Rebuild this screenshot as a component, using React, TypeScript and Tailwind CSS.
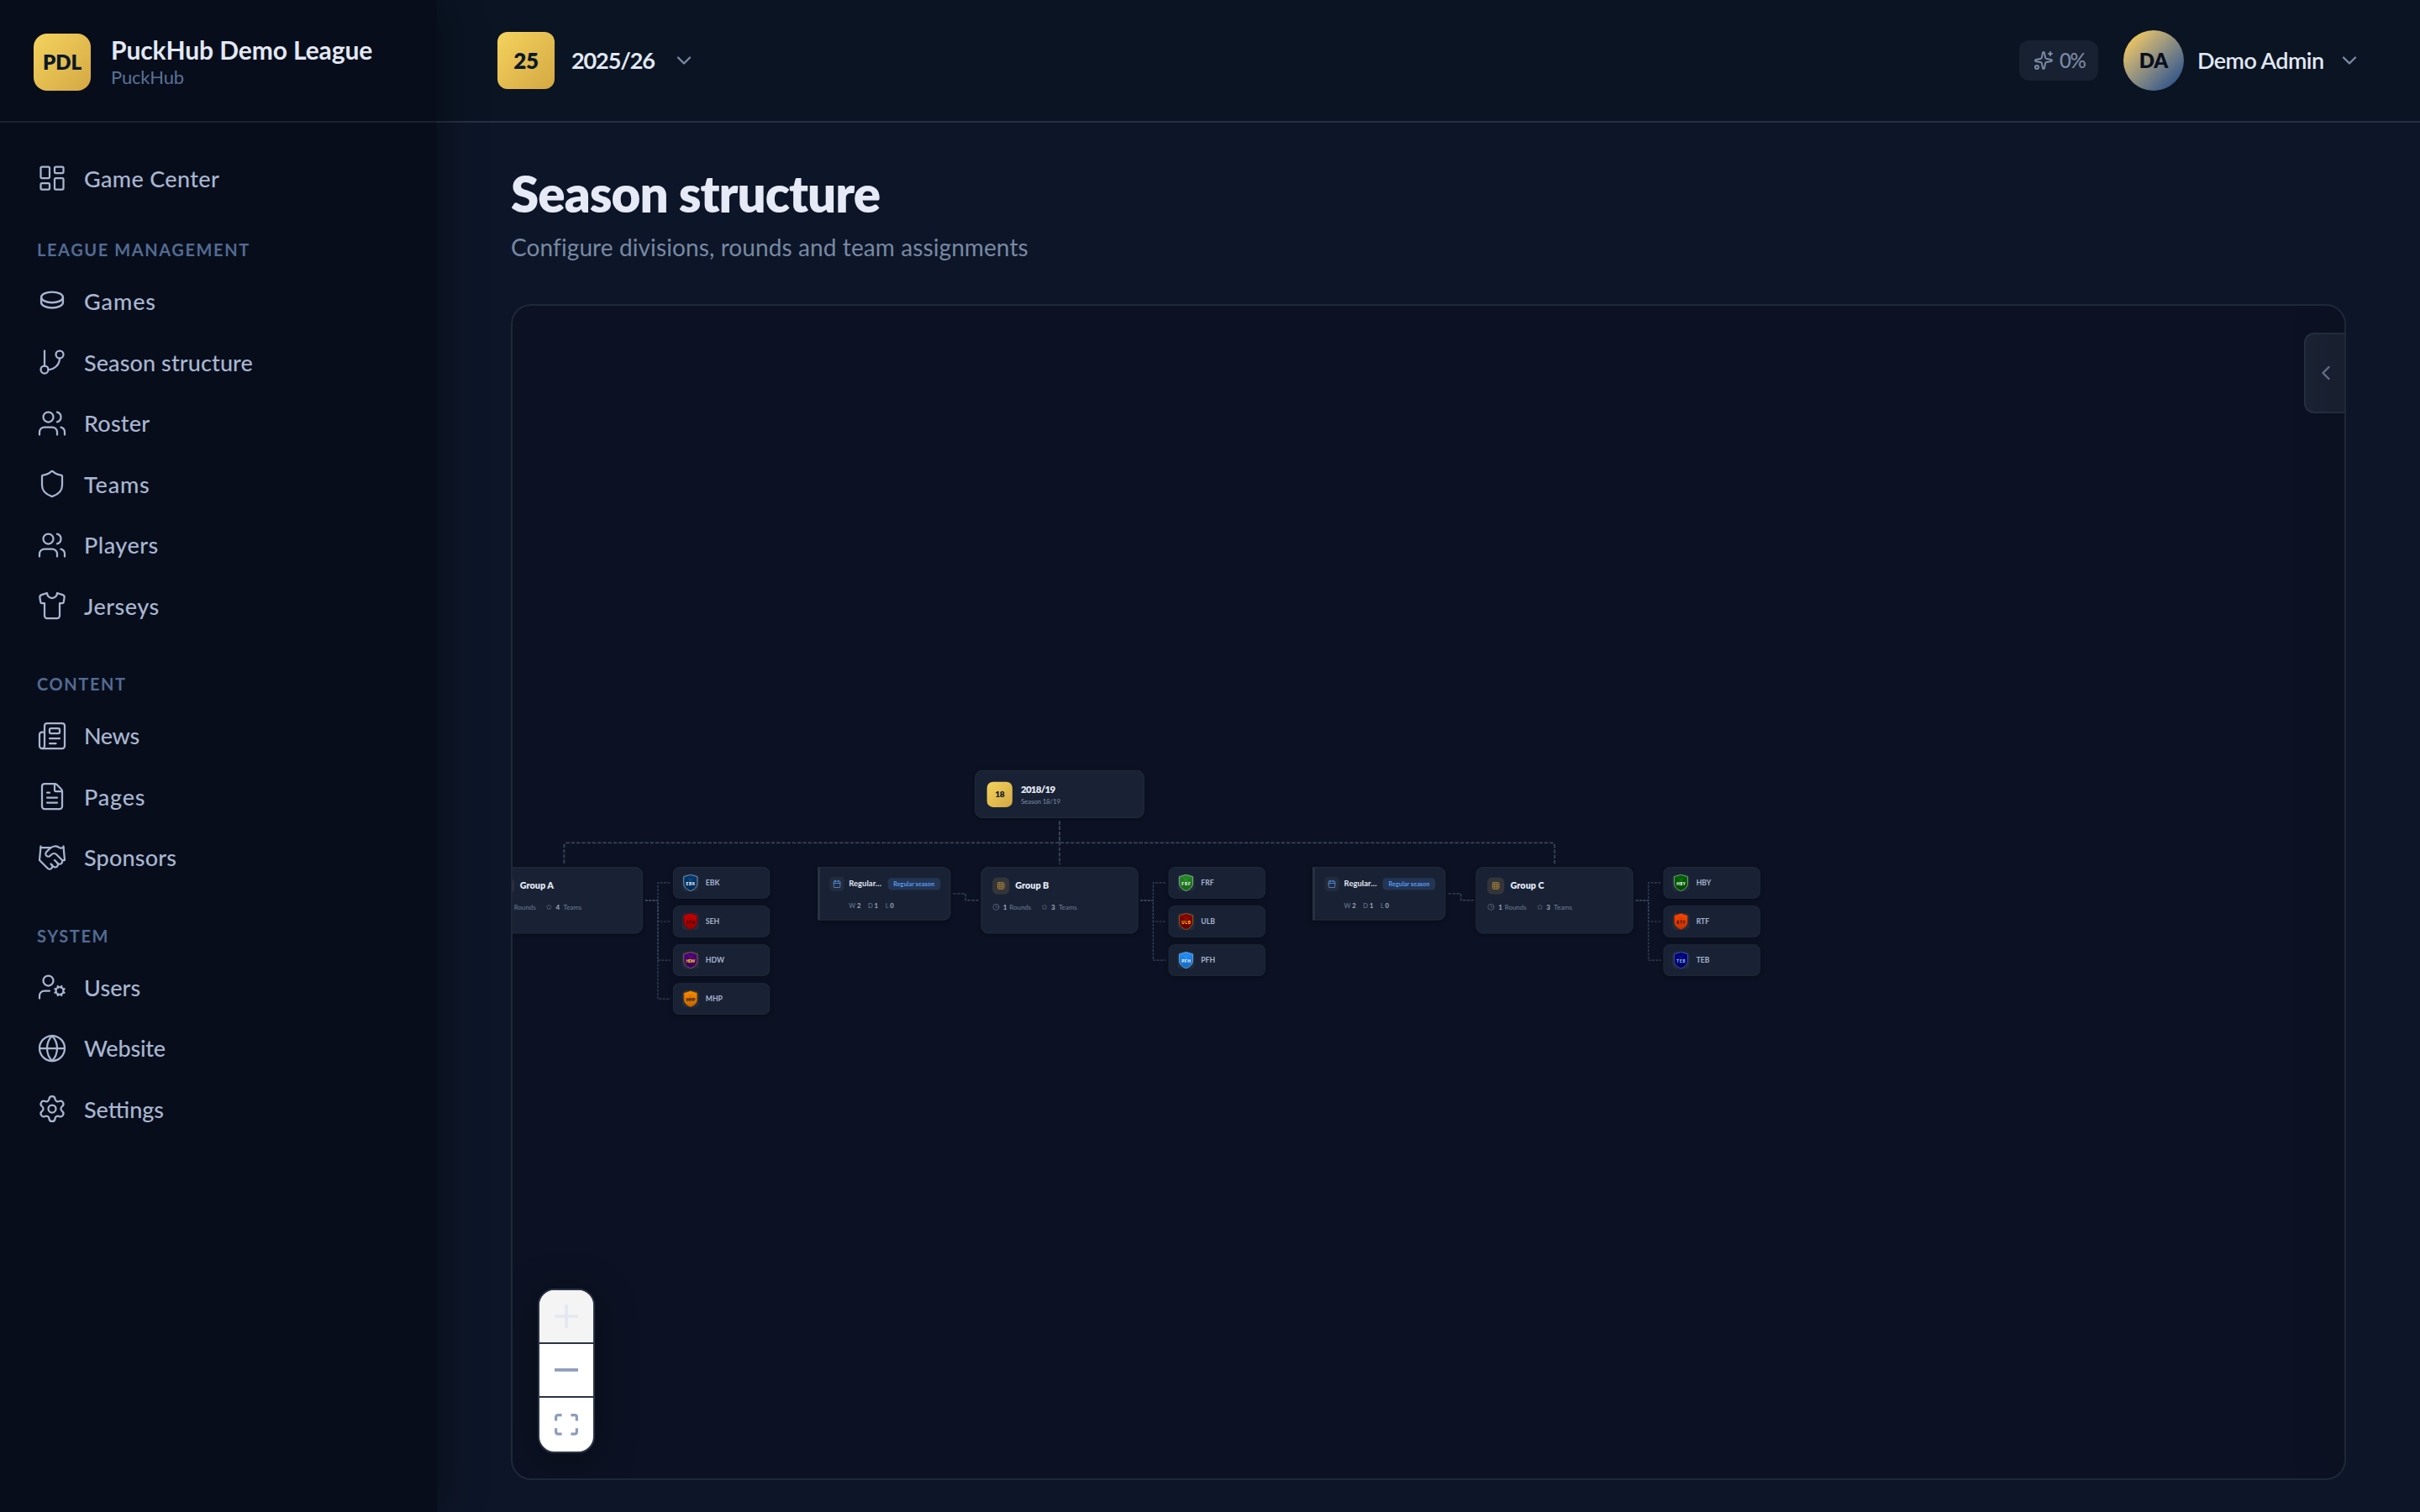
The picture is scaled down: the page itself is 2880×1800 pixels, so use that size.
import type { ReactNode } from 'react';
import {
  Calendar,
  ChevronDown,
  ChevronLeft,
  Clock,
  FileText,
  GitBranch,
  Globe,
  Grid3x3,
  Handshake,
  LayoutDashboard,
  Newspaper,
  Settings,
  Shield,
  Shirt,
  Sparkles,
  Star,
  UserCog,
  Users,
} from 'lucide-react';

const iconProps = { size: 36, strokeWidth: 1.5 };

const PuckIcon = () => (
  <svg width="36" height="36" viewBox="0 0 24 24" fill="none" stroke="currentColor" strokeWidth="1.6">
    <ellipse cx="12" cy="8.6" rx="8.6" ry="4.2" />
    <path d="M3.4 8.6v4.2c0 2.3 3.9 4.2 8.6 4.2s8.6-1.9 8.6-4.2V8.6" />
  </svg>
);

const sections: { title?: string; items: { label: string; icon: ReactNode; tracking: string }[] }[] = [
  {
    items: [{ label: 'Game Center', icon: <LayoutDashboard {...iconProps} />, tracking: 'tracking-[0.35px]' }],
  },
  {
    title: 'LEAGUE MANAGEMENT',
    items: [
      { label: 'Games', icon: <PuckIcon />, tracking: 'tracking-[0.9px]' },
      { label: 'Season structure', icon: <GitBranch {...iconProps} />, tracking: 'tracking-[0.1px]' },
      { label: 'Roster', icon: <Users {...iconProps} />, tracking: 'tracking-[0.2px]' },
      { label: 'Teams', icon: <Shield {...iconProps} />, tracking: 'tracking-[0.8px]' },
      { label: 'Players', icon: <Users {...iconProps} />, tracking: 'tracking-[0.5px]' },
      { label: 'Jerseys', icon: <Shirt {...iconProps} />, tracking: 'tracking-[0.5px]' },
    ],
  },
  {
    title: 'CONTENT',
    items: [
      { label: 'News', icon: <Newspaper {...iconProps} />, tracking: 'tracking-[-0.4px]' },
      { label: 'Pages', icon: <FileText {...iconProps} />, tracking: 'tracking-[0.8px]' },
      { label: 'Sponsors', icon: <Handshake {...iconProps} />, tracking: 'tracking-[0.2px]' },
    ],
  },
  {
    title: 'SYSTEM',
    items: [
      { label: 'Users', icon: <UserCog {...iconProps} />, tracking: 'tracking-[0.1px]' },
      { label: 'Website', icon: <Globe {...iconProps} />, tracking: 'tracking-[-0.2px]' },
      { label: 'Settings', icon: <Settings {...iconProps} />, tracking: 'tracking-normal' },
    ],
  },
];

const Sidebar = () => {
  return (
    <aside className="z-20 flex w-[520px] shrink-0 flex-col bg-[#070d1b] shadow-[8px_0_48px_rgba(0,0,0,0.3)]">
      <div className="flex h-[146px] items-center gap-6 border-b-2 border-[#1a2130] pl-10 pt-1">
        <div className="flex size-[68px] items-center justify-center rounded-2xl bg-linear-135 from-[#f4d35e] to-[#d4a843] text-2xl font-extrabold text-[#0b1929]">
          PDL
        </div>
        <div className="flex flex-col">
          <span className="text-[30px] leading-9 font-bold tracking-[-0.1px] text-[#e2e8f4]">PuckHub Demo League</span>
          <span className="text-[22px] leading-[30px] tracking-[-0.2px] text-[#5a7196]">PuckHub</span>
        </div>
      </div>
      <nav className="flex flex-col pt-8">
        {sections.map((section, i) => (
          <div key={i} className={i === 0 ? 'mb-[18px]' : 'mb-[26px]'}>
            {section.title && (
              <div className="flex h-[60px] items-center pt-[5px] pl-11 text-[20px] font-bold tracking-[1.6px] text-[#536b92]">
                {section.title}
              </div>
            )}
            <div className="flex flex-col gap-1">
              {section.items.map((item) => (
                <div
                  key={item.label}
                  className={`flex h-[68.5px] items-center gap-5 pl-11 text-[27px] font-medium text-[#a8b6d0] ${item.tracking}`}
                >
                  {item.icon}
                  <span className="pt-px">{item.label}</span>
                </div>
              ))}
            </div>
          </div>
        ))}
      </nav>
    </aside>
  );
};

const Header = () => {
  return (
    <header className="flex h-[146px] shrink-0 items-center justify-between border-b-2 border-[#263042] bg-[#0a1423] pr-[70px] pl-[72px]">
      <div className="flex items-center">
        <div className="flex size-[68px] items-center justify-center rounded-xl bg-linear-135 from-[#f4d35e] to-[#d4a843] text-[26px] font-extrabold tracking-[-0.3px] text-[#0b1929]">
          25
        </div>
        <span className="ml-5 w-[99px] text-[27px] font-bold tracking-[-1.1px] text-[#e2e8f4]">2025/26</span>
        <ChevronDown size={28} className="ml-[21px] text-[#7b8aa5]" />
      </div>
      <div className="flex items-center">
        <div className="mr-[30px] flex h-12 w-[94px] items-center gap-[7px] rounded-xl bg-[#182131] pl-[17px] text-2xl font-medium tracking-[-1.5px] text-[#7b8aa5]">
          <Sparkles size={24} />
          <span>0%</span>
        </div>
        <div className="mr-4 flex size-[72px] items-center justify-center rounded-full bg-linear-135 from-[#f4c95a] from-10% to-[#2f5288] to-90% text-2xl font-extrabold text-[#0b1020]">
          DA
        </div>
        <span className="w-[151px] text-[27px] font-semibold tracking-[-0.55px] whitespace-nowrap text-[#e2e8f4]">
          Demo Admin
        </span>
        <ChevronDown size={28} className="ml-4 text-[#7b8aa5]" />
      </div>
    </header>
  );
};

type Team = { code: string; fill: string; dark: string; edge: string; text: string };

const groups: { name: string; x: number; teams: Team[] }[] = [
  {
    name: 'Group A',
    x: 51,
    teams: [
      { code: 'EBK', fill: '#003a70', dark: '#002a55', edge: '#8ba0b8', text: '#ffffff' },
      { code: 'SEH', fill: '#cc0000', dark: '#960000', edge: '#5a0a12', text: '#1a0000' },
      { code: 'HDW', fill: '#4b0082', dark: '#38005f', edge: '#8a6a3a', text: '#ffd700' },
      { code: 'MHP', fill: '#ff8c00', dark: '#c06500', edge: '#6b4310', text: '#1a0d00' },
    ],
  },
  {
    name: 'Group B',
    x: 869.7,
    teams: [
      { code: 'FRF', fill: '#228b22', dark: '#186518', edge: '#8fb59a', text: '#ffffff' },
      { code: 'ULB', fill: '#8b0000', dark: '#640000', edge: '#8a6a1a', text: '#ffd700' },
      { code: 'PFH', fill: '#1e90ff', dark: '#1568bd', edge: '#6fa8dd', text: '#ffffff' },
    ],
  },
  {
    name: 'Group C',
    x: 1688.3,
    teams: [
      { code: 'HBY', fill: '#006400', dark: '#004a00', edge: '#7fa98a', text: '#ffffff' },
      { code: 'RTF', fill: '#ff4500', dark: '#c03400', edge: '#6b2a14', text: '#1a0700' },
      { code: 'TEB', fill: '#000080', dark: '#00005c', edge: '#3a5aa8', text: '#87cefa' },
    ],
  },
];

const TeamCrest = ({ team }: { team: Team }) => (
  <svg viewBox="0 0 28 28" className="size-7">
    <defs>
      <linearGradient id={`crest-${team.code}`} x1="0" y1="0" x2="0" y2="1">
        <stop offset="0" stopColor={team.fill} />
        <stop offset="1" stopColor={team.dark} />
      </linearGradient>
    </defs>
    <path
      d="M14 .6 25.2 4V15c0 6-5 10-11.2 12.6C7.8 25 2.8 21 2.8 15V4z"
      fill={`url(#crest-${team.code})`}
      stroke={team.edge}
      strokeWidth="1.2"
    />
    <path d="M10 6l8 7M18 6l-8 7" stroke={team.text} strokeOpacity="0.25" strokeWidth="0.7" />
    <text x="14" y="18.6" textAnchor="middle" fontSize="6.4" fontWeight="900" fill={team.text} textLength="14.5">
      {team.code}
    </text>
  </svg>
);

const SeasonNode = () => (
  <div className="absolute top-0 left-[860px] flex h-[79px] w-[280px] items-center gap-3.5 rounded-xl border border-[#283243] bg-[#192234] px-[19px] shadow-[0_2px_8px_rgba(0,0,0,0.3)]">
    <div className="flex size-[42px] items-center justify-center rounded-[10px] bg-linear-135 from-[#f4d35e] to-[#d4a843] text-sm font-extrabold tracking-[-0.5px] text-[#0b1929]">
      18
    </div>
    <div className="flex flex-col gap-0.5">
      <span className="text-base leading-5 font-extrabold tracking-[-1px] text-[#e2e8f4]">2018/19</span>
      <span className="text-[11px] leading-[15px] tracking-[-0.2px] text-[#7b8aa5]">Season 18/19</span>
    </div>
  </div>
);

const GroupNode = ({ name, x, teams }: { name: string; x: number; teams: number }) => (
  <div
    className="absolute top-40 h-[110px] w-[260px] rounded-xl border border-[#283243] bg-[#192234] pt-4 pl-[18px] shadow-[0_2px_8px_rgba(0,0,0,0.3)]"
    style={{ left: x }}
  >
    <div className="flex items-center gap-2.5">
      <div className="flex size-7 items-center justify-center rounded-lg bg-[#33353a] text-[#c9983a]">
        <Grid3x3 size={14} strokeWidth={1.6} />
      </div>
      <span className="pb-px text-[15px] font-extrabold text-[#e2e8f4]">{name}</span>
    </div>
    <div className="mt-[13px] flex items-center text-[11px] text-[#6d7c97]">
      <Clock size={12} strokeWidth={1.8} className="mr-1.5" />
      <b className="mr-1 text-[#a0aec8]">1</b> Rounds
      <Star size={10} strokeWidth={1.8} className="mr-1.5 ml-[17px]" />
      <b className="mr-1.5 text-[#a0aec8]">{teams}</b> Teams
    </div>
  </div>
);

const RoundNode = ({ x }: { x: number }) => (
  <div
    className="absolute top-40 h-[88px] w-[220px] rounded-r-xl border border-l-4 border-[#283243] bg-[#192234] pt-[15px] pl-4 shadow-[0_2px_8px_rgba(0,0,0,0.3)]"
    style={{ left: x }}
  >
    <div className="flex items-center">
      <div className="mr-2 flex size-6 items-center justify-center rounded-md bg-[#232c3d] text-[#5b9df5]">
        <Calendar size={14} strokeWidth={1.8} />
      </div>
      <span className="w-[64px] pb-px text-[13px] font-bold tracking-[0.1px] text-[#e2e8f4]">Regular…</span>
      <span className="flex h-5 w-[87px] items-center justify-center rounded-md bg-[#233553] text-[10px] font-bold tracking-[0.1px] whitespace-nowrap text-[#5b9df5]">
        Regular season
      </span>
    </div>
    <div className="mt-4 ml-8 flex gap-3 text-[10.5px] leading-4 text-[#6d7c97]">
      <span>
        W <b className="text-[#a0aec8]">2</b>
      </span>
      <span>
        D <b className="text-[#a0aec8]">1</b>
      </span>
      <span>
        L <b className="text-[#a0aec8]">0</b>
      </span>
    </div>
  </div>
);

const TeamNode = ({ team, x, y }: { team: Team; x: number; y: number }) => (
  <div
    className="absolute flex h-[52px] w-40 items-center gap-[11px] rounded-[10px] border border-[#252f40] bg-[#192234] pl-[14px] shadow-[0_2px_8px_rgba(0,0,0,0.25)]"
    style={{ left: x, top: y }}
  >
    <div className="flex size-7 items-center justify-center rounded-md bg-[#232c3d]">
      <TeamCrest team={team} />
    </div>
    <span className="text-xs font-bold text-[#a5b4cf]">{team.code}</span>
  </div>
);

// Dashed connectors between season, groups, rounds and teams
const Edges = () => (
  <svg width="2200" height="420" className="absolute top-0 left-0" fill="none" stroke="#37455a">
    <g strokeWidth="2.5" strokeDasharray="6 2.7">
      <path d="M1000 84V120V156" />
      <path d="M1000 84V115Q1000 120 995 120H186Q181 120 181 125V156" />
      <path d="M1000 84V115Q1000 120 1005 120H1813.3Q1818.3 120 1818.3 125V156" />
    </g>
    {groups.map((g) => (
      <g key={g.name} strokeWidth="1.7" strokeDasharray="4 2">
        {g.x > 270 && <path d={`M${g.x - 46} 204H${g.x - 25}V215H${g.x - 4}`} strokeWidth="2" strokeDasharray="5 2" />}
        {g.teams.map((t, i) => (
          <path key={t.code} d={`M${g.x + 264} 215H${g.x + 285}V${186 + i * 64}H${g.x + 306}`} />
        ))}
      </g>
    ))}
  </svg>
);

const StructureCanvas = () => {
  return (
    <div className="relative h-[1400px] overflow-hidden rounded-3xl border-2 border-[#1f2838] bg-[#0c1223]">
      <div className="absolute top-[552.6px] left-[-68.9px] h-[420px] w-[2200px] origin-top-left scale-[0.72]">
        <Edges />
        <SeasonNode />
        {groups.map((g) => (
          <div key={g.name}>
            {g.x > 270 && <RoundNode x={g.x - 270} />}
            <GroupNode name={g.name} x={g.x} teams={g.teams.length} />
            {g.teams.map((t, i) => (
              <TeamNode key={t.code} team={t} x={g.x + 310} y={159.5 + i * 64} />
            ))}
          </div>
        ))}
      </div>

      <div className="absolute top-8 right-0 flex h-24 w-12 items-center justify-center rounded-l-xl border-2 border-r-0 border-[#252f40] bg-[#1a2233] pl-0.5 text-[#66758f]">
        <ChevronLeft size={28} />
      </div>
      <div className="absolute inset-y-0 -right-2 w-2 shadow-[-8px_0_48px_rgba(0,0,0,0.4)]" />

      <div className="absolute bottom-[30px] left-[30px] flex w-[68px] flex-col overflow-hidden rounded-[20px] border-2 border-[#2a3347] bg-white shadow-[0_8px_48px_rgba(0,0,0,0.35)]">
        <div className="flex h-16 items-center justify-center border-b-2 border-[#2a3347] bg-[#f4f4f4]">
          <svg viewBox="0 0 32 32" className="w-7 fill-[#e2e8f0]">
            <path d="M32 18.133H18.133V32h-4.266V18.133H0v-4.266h13.867V0h4.266v13.867H32z" />
          </svg>
        </div>
        <div className="flex h-16 items-center justify-center border-b-2 border-[#2a3347]">
          <svg viewBox="0 0 32 5" className="w-7 fill-[#8e9dbd]">
            <path d="M0 0h32v4.2H0z" />
          </svg>
        </div>
        <div className="flex h-16 items-center justify-center">
          <svg viewBox="0 0 32 30" className="w-7 fill-[#8e9dbd]">
            <path d="M3.692 4.63c0-.53.4-.938.939-.938h5.215V0H4.708C2.13 0 0 2.054 0 4.63v5.216h3.692V4.631zM27.354 0h-5.2v3.692h5.17c.53 0 .984.4.984.939v5.215H32V4.631A4.624 4.624 0 0027.354 0zm.954 24.83c0 .532-.4.94-.939.94h-5.215v3.768h5.215c2.577 0 4.631-2.13 4.631-4.707v-5.139h-3.692v5.139zm-23.677.94c-.531 0-.939-.4-.939-.94v-5.138H0v5.139c0 2.577 2.13 4.707 4.708 4.707h5.138V25.77H4.631z" />
          </svg>
        </div>
      </div>
    </div>
  );
};

const App = () => {
  return (
    <div className="flex h-[1800px] w-[2880px] overflow-hidden bg-[#0d1628] font-[Lato,'Open_Sans',sans-serif]">
      <Sidebar />
      <div className="flex flex-1 flex-col">
        <Header />
        <main className="flex flex-col pt-12 pr-[88px] pl-[88px]">
          <h1 className="text-[60px] leading-[72px] font-extrabold tracking-[-0.95px] text-[#e6eaf6]">Season structure</h1>
          <p className="mt-2.5 mb-[50px] text-[28px] leading-9 tracking-[0.1px] text-[#7889a3]">
            Configure divisions, rounds and team assignments
          </p>
          <StructureCanvas />
        </main>
      </div>
    </div>
  );
};

export default App;
